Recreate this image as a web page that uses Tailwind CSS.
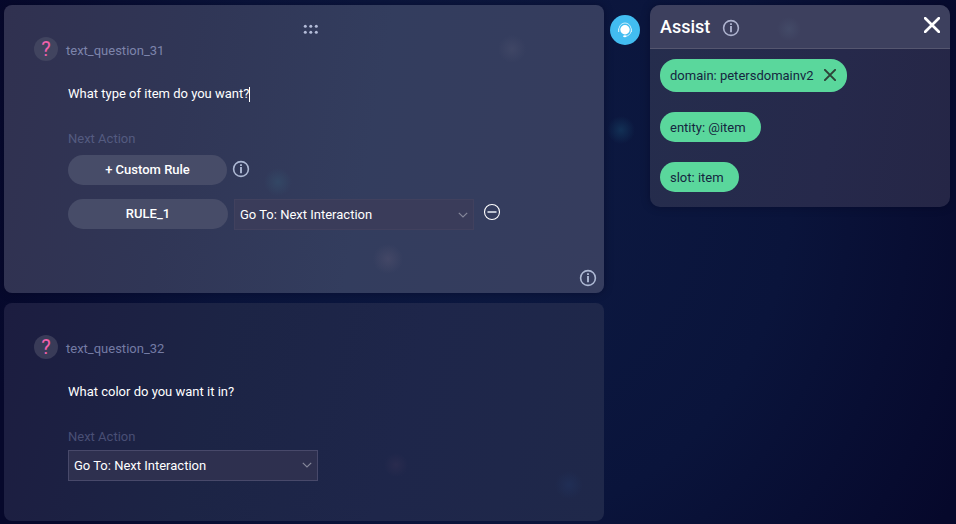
<!DOCTYPE html>
<html lang="en">
<head>
<meta charset="utf-8">
<title>Dialog builder</title>
<script src="https://cdn.jsdelivr.net/npm/@tailwindcss/browser@4"></script>
</head>
<body class="h-[524px] w-[956px] overflow-hidden bg-[radial-gradient(circle_14px_at_621px_130px,#123055_0%,#12305500_100%),radial-gradient(ellipse_530px_620px_at_500px_180px,#0d1a42_0%,#0a143b_55%,#06082b_100%)] font-[Roboto,sans-serif] text-[13px] leading-4 text-white">
<svg class="hidden">
  <symbol id="info" viewBox="0 0 18 18">
    <circle cx="9" cy="9" r="7.400" fill="none" stroke="currentColor" stroke-width="1.600"/>
    <path d="M9 7v6.300M9 4.300v1.600" stroke="currentColor" stroke-width="1.900"/>
  </symbol>
  <symbol id="chevron" viewBox="0 0 10 6"><path d="M.8.8 5 5 9.200.8" fill="none" stroke="currentColor" stroke-width="1.200"/></symbol>
  <symbol id="cross" viewBox="0 0 16 16"><path d="M1.200 1.200 14.800 14.800M14.800 1.200 1.200 14.800" stroke="currentColor" stroke-width="2.700" stroke-linecap="round"/></symbol>
</svg>
<main class="flex items-start pl-1 pt-[5px]">
  <section class="flex w-[600px] flex-col gap-[10px]">
    <article class="relative h-[288px] rounded-[8px] bg-[radial-gradient(circle_14px_at_274px_177px,#334765_0%,#33476500_100%),radial-gradient(circle_15px_at_384px_254px,#434766_0%,#43476600_100%),radial-gradient(circle_14px_at_508px_44px,#3f4665_0%,#3f466500_100%),linear-gradient(100deg,#303150_0%,#303656_30%,#333d5e_60%,#363d5e_100%)] pl-[30px] pt-8 shadow-[0_0_8px_#03061c66]">
      <svg class="absolute left-[299px] top-[19px] h-[11px] w-4 fill-[#b4bcd8]" viewBox="0 0 16 11">
        <circle cx="2.300" cy="2.300" r="1.500"/><circle cx="7.800" cy="2.300" r="1.500"/><circle cx="13.300" cy="2.300" r="1.500"/>
        <circle cx="2.300" cy="8.300" r="1.500"/><circle cx="7.800" cy="8.300" r="1.500"/><circle cx="13.300" cy="8.300" r="1.500"/>
      </svg>
      <div class="flex items-center gap-2">
        <span class="flex size-6 items-center justify-center rounded-full bg-[#41445f] text-[20px] text-[#f261ad]">?</span>
        <span class="pt-[3px] text-[#7d84ab]">text_question_31</span>
      </div>
      <div class="pl-[34px]">
        <p class="mt-[25px] flex items-center">What type of item do you want?<span class="h-[15px] w-px bg-white"></span></p>
        <p class="mt-[29px] text-[#545b80]">Next Action</p>
        <div class="mt-2 flex items-center">
          <button class="h-[30px] w-[159px] rounded-full bg-[#474c68] font-medium">+ Custom Rule</button>
          <svg class="mb-[2px] ml-[5px] size-[18px] text-[#adb8d3]"><use href="#info"/></svg>
        </div>
        <div class="mt-[14px] flex items-start">
          <button class="h-[30px] w-[160px] rounded-full bg-[#474c68] font-medium">RULE_1</button>
          <div class="ml-[6px] flex h-[31px] w-[240px] items-center justify-between border border-[#41415e] bg-[#3a3c5a] pl-[5px] pr-[5px]">
            <span>Go To: Next Interaction</span>
            <svg class="h-[6px] w-[10px] text-[#85879a]"><use href="#chevron"/></svg>
          </div>
          <svg class="ml-[9px] mt-1 size-[18px]" viewBox="0 0 18 18"><circle cx="9" cy="9" r="7.500" fill="none" stroke="#fff" stroke-width="1.100"/><path d="M4.500 9h9" stroke="#c5cad6" stroke-width="1.900"/></svg>
        </div>
      </div>
      <svg class="absolute bottom-[6px] right-[7px] size-[18px] text-[#adb8d3]"><use href="#info"/></svg>
    </article>
    <article class="h-[218px] rounded-[8px] bg-[radial-gradient(circle_12px_at_392px_162px,#292b4e_0%,#292b4e00_100%),radial-gradient(circle_14px_at_565px_182px,#202e55_0%,#202e5500_100%),linear-gradient(105deg,#1c1d40_0%,#1c2445_35%,#1e264a_65%,#1f284a_100%)] pl-[30px] pt-8">
      <div class="flex items-center gap-2">
        <span class="flex size-6 items-center justify-center rounded-full bg-[#393b58] text-[20px] text-[#f261ad]">?</span>
        <span class="pt-[3px] text-[#747ba4]">text_question_32</span>
      </div>
      <div class="pl-[34px]">
        <p class="mt-[25px]">What color do you want it in?</p>
        <p class="mt-[29px] text-[#494f75]">Next Action</p>
        <div class="mt-[5px] flex h-[31px] w-[250px] items-center justify-between border border-[#48496a] bg-[#2e304f] pl-[5px] pr-[5px]">
          <span>Go To: Next Interaction</span>
          <svg class="mb-[2px] h-[6px] w-[10px] text-[#85879a]"><use href="#chevron"/></svg>
        </div>
      </div>
    </article>
  </section>
  <div class="ml-[6px] mt-[10px] flex size-[30px] items-center justify-center rounded-full bg-[#42bdf1]">
    <svg class="size-4" viewBox="0 0 16 16" fill="none">
      <circle cx="8" cy="7.700" r="4.700" fill="#fff"/>
      <path d="M2 6.500C3 -.8 13 -.8 14 6.500M14 9.500c-.4 2.800-2.800 4.400-5.300 4.700" stroke="#fff" stroke-width=".7"/>
      <path d="M1.700 6.500v3.500M14.300 6.500v3.500" stroke="#fff" stroke-width=".9"/>
      <ellipse cx="7.800" cy="14.200" rx="1.700" ry="1" fill="#fff"/>
    </svg>
  </div>
  <aside class="ml-[10px] h-[202px] w-[300px] overflow-hidden rounded-[10px] bg-[linear-gradient(100deg,#252d4d_0%,#26294b_60%,#252646_100%)] shadow-[0_0_8px_#03061c66]">
    <header class="flex h-11 items-center border-b border-[#55566f] bg-[radial-gradient(circle_12px_at_139px_24px,#434a67_0%,#434a6700_100%)] bg-[#3d405e] pl-[10px] pr-[10px]">
      <h1 class="text-[18px] font-medium leading-5">Assist</h1>
      <svg class="ml-3 mt-[3px] size-[18px] text-[#adb2ce]"><use href="#info"/></svg>
      <svg class="mb-[3px] ml-auto size-4"><use href="#cross"/></svg>
    </header>
    <div class="flex flex-col items-start gap-5 p-[10px] text-[#15263f]">
      <div class="flex h-[33px] w-[187px] items-center justify-between rounded-[16px] bg-[#5ad79c] pl-[10px] pr-[11px]"><span>domain: petersdomainv2</span><svg class="mb-px size-3 text-[#2e4238]"><use href="#cross"/></svg></div>
      <div class="flex h-[30px] w-[101px] items-center rounded-full bg-[#5ad79c] pl-[10px] pt-[2px]">entity: @item</div>
      <div class="flex h-[30px] w-[79px] items-center rounded-full bg-[#5ad79c] pl-[10px] pt-[2px]">slot: item</div>
    </div>
  </aside>
</main>
</body>
</html>
